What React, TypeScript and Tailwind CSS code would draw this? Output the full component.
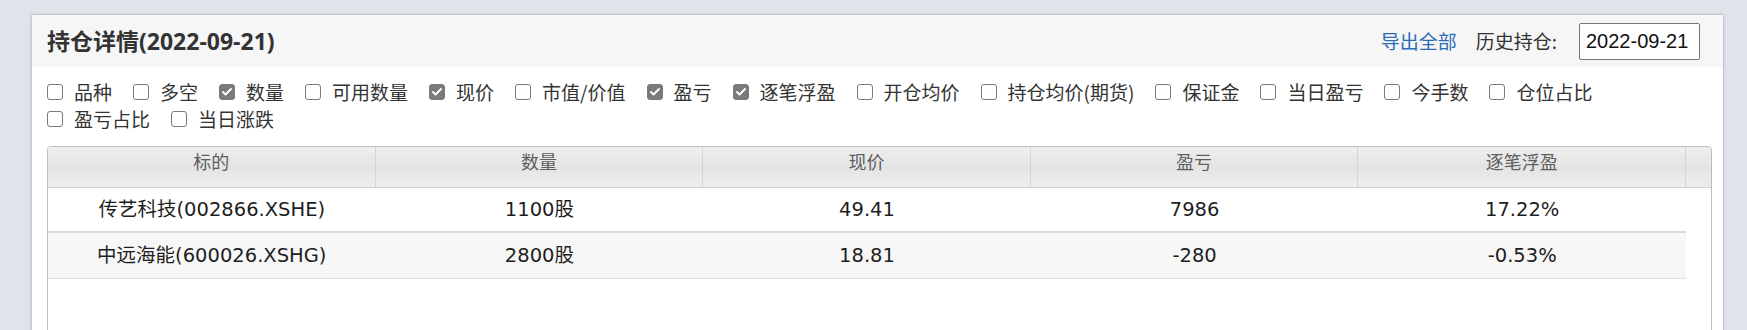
import { Check } from 'lucide-react'

type Field = { label: string; checked: boolean }

const fields: Field[] = [
  { label: '品种', checked: false },
  { label: '多空', checked: false },
  { label: '数量', checked: true },
  { label: '可用数量', checked: false },
  { label: '现价', checked: true },
  { label: '市值/价值', checked: false },
  { label: '盈亏', checked: true },
  { label: '逐笔浮盈', checked: true },
  { label: '开仓均价', checked: false },
  { label: '持仓均价(期货)', checked: false },
  { label: '保证金', checked: false },
  { label: '当日盈亏', checked: false },
  { label: '今手数', checked: false },
  { label: '仓位占比', checked: false },
  { label: '盈亏占比', checked: false },
  { label: '当日涨跌', checked: false },
]

const columns = ['标的', '数量', '现价', '盈亏', '逐笔浮盈']

const rows = [
  ['传艺科技(002866.XSHE)', '1100股', '49.41', '7986', '17.22%'],
  ['中远海能(600026.XSHG)', '2800股', '18.81', '-280', '-0.53%'],
]

function Box({ checked }: { checked: boolean }) {
  return (
    <span
      className={`w-[16px] h-[16px] rounded-[3px] border-[1.5px] border-[#7a7a7a] flex items-center justify-center flex-shrink-0 ${
        checked ? 'bg-[#7a7a7a]' : 'bg-white'
      }`}
    >
      {checked && <Check className="w-[12px] h-[12px] text-white" strokeWidth={4} />}
    </span>
  )
}

export default function App() {
  return (
    <div className="h-[330px] overflow-hidden bg-[#dfe3ea] pl-[32px] pr-[24px] pt-[15px] font-['Noto_Sans_CJK_SC',sans-serif]">
      <div className="bg-white h-[400px] shadow-[0_0_3px_rgba(0,0,0,0.3)]">
        {/* 标题栏 */}
        <div className="h-[52px] bg-[#f6f6f6] flex items-center justify-between pl-[15px] pr-[23px]">
          <h1 className="text-[23px] font-bold text-[#333] font-['Open_Sans','Noto_Sans_CJK_SC',sans-serif]">
            持仓详情(2022-09-21)
          </h1>
          <div className="flex items-center text-[19px] text-[#333]">
            <a className="text-[#2b6cb8] mr-[19px] cursor-pointer">导出全部</a>
            <span className="mr-[22px]">历史持仓:</span>
            <input
              readOnly
              value="2022-09-21"
              className="w-[121px] h-[37px] border border-[#767676] rounded-[2px] bg-white px-[6px] text-[20px] text-[#111] font-['Liberation_Sans',sans-serif] outline-none"
            />
          </div>
        </div>

        {/* 列选择 */}
        <div className="flex flex-wrap pl-[15px] pr-[15px] pt-[11px] text-[19px] leading-[27px] text-[#333]">
          {fields.map((f) => (
            <label key={f.label} className="flex items-center mr-[21px]">
              <Box checked={f.checked} />
              <span className="ml-[11px] whitespace-nowrap">{f.label}</span>
            </label>
          ))}
        </div>

        {/* 表格 */}
        <div className="ml-[15px] mr-[11px] mt-[14px] h-[300px] border border-[#bcbcbc] rounded-t-[4px] overflow-hidden">
          <div className="grid grid-cols-[repeat(5,1fr)_25px] h-[41px] border-b border-[#d2d2d2] bg-gradient-to-b from-[#efefef] via-[#e4e4e4] to-[#ededed]">
            {columns.map((c) => (
              <div key={c} className="border-r border-[#d4d4d4] text-center pt-[2px] leading-[24px] text-[18px] text-[#5e5e5e]">
                {c}
              </div>
            ))}
            <div />
          </div>
          <div className="mr-[25px] font-['DejaVu_Sans','Noto_Sans_CJK_SC',sans-serif] text-[19.5px] text-[#1e1e1e]">
            {rows.map((r, i) => (
              <div
                key={r[0]}
                className={`grid grid-cols-5 items-center ${
                  i === 0 ? 'h-[45px] border-b-2 border-[#dadada]' : 'h-[46px] bg-[#f7f7f7] border-b border-[#dedede]'
                }`}
              >
                {r.map((cell, j) => (
                  <div key={j} className="text-center">
                    {cell}
                  </div>
                ))}
              </div>
            ))}
          </div>
        </div>
      </div>
    </div>
  )
}
